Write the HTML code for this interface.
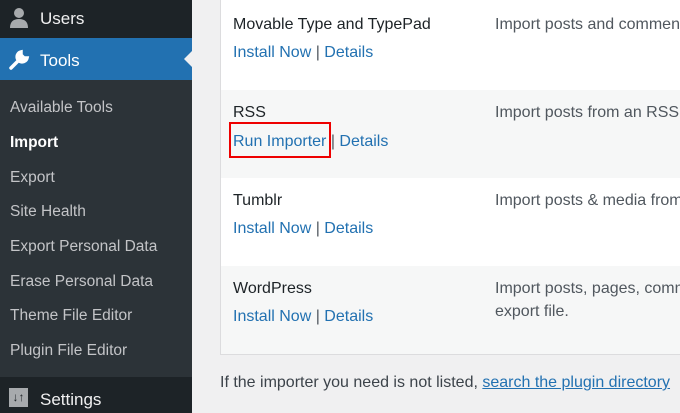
<!DOCTYPE html>
<html><head><style>
*{margin:0;padding:0;box-sizing:border-box}
body{width:680px;height:413px;overflow:hidden;background:#f0f0f1;font-family:"Liberation Sans",sans-serif;position:relative}
.side{position:absolute;left:0;top:0;width:192px;height:413px;background:#2c3338}
.users{position:absolute;top:0;left:0;width:192px;height:38px;background:#1d2327;color:#f0f0f1;font-size:17px}
.tools{position:absolute;top:38px;left:0;width:192px;height:42px;background:#2271b1;color:#fff;font-size:17px}
.settings{position:absolute;top:377px;left:0;width:192px;height:36px;background:#1d2327;color:#f0f0f1;font-size:17px}
.lbl{position:absolute;left:40px}
.sub{position:absolute;left:10px;color:#c3c4c7;font-size:15.5px}
.arrow{position:absolute;right:0;top:13px;width:0;height:0;border-top:8px solid transparent;border-bottom:8px solid transparent;border-right:8px solid #f0f0f1}
.box{position:absolute;left:220px;top:0;width:460px;height:355px;border-left:1px solid #dcdcde;border-bottom:1px solid #dcdcde;background:#fff;overflow:hidden}
.row{position:absolute;left:0;width:460px;height:88px;overflow:hidden}
.alt{background:#f6f7f7}
.t{position:absolute;left:12px;color:#1d2327;font-size:16px}
.l{position:absolute;left:12px;color:#2271b1;font-size:16px}
.l span{color:#50575e}
.d{position:absolute;left:274px;color:#50575e;font-size:16px;line-height:23px;white-space:nowrap}
</style></head><body>
<div class="side">
<div class="users">
<svg style="position:absolute;left:9px;top:7px" width="20" height="22" viewBox="0 0 20 22"><circle cx="10" cy="6" r="5" fill="#a7aaad"/><path d="M1 21 Q1 12 10 12 Q19 12 19 21 Z" fill="#a7aaad"/></svg>
<span class="lbl" style="top:9px">Users</span></div>
<div class="tools">
<svg style="position:absolute;left:8px;top:11px" width="22" height="22" viewBox="0 0 22 22"><path d="M3 19 L11 11 M13 3 a5 5 0 1 0 6 6 l-3 0 -3 -3 z" stroke="#fff" stroke-width="3.5" fill="#fff" stroke-linecap="round"/></svg>
<span class="lbl" style="top:13px">Tools</span><div class="arrow"></div></div>
<div class="sub" style="top:99px">Available Tools</div>
<div class="sub" style="top:134px;color:#fff;font-weight:bold">Import</div>
<div class="sub" style="top:169px">Export</div>
<div class="sub" style="top:203px">Site Health</div>
<div class="sub" style="top:238px">Export Personal Data</div>
<div class="sub" style="top:273px">Erase Personal Data</div>
<div class="sub" style="top:307px">Theme File Editor</div>
<div class="sub" style="top:342px">Plugin File Editor</div>
<div class="settings">
<div style="position:absolute;left:9px;top:11px;width:19px;height:19px;background:#a7aaad;color:#1d2327;font-size:12px;font-weight:bold;text-align:center;line-height:19px">↓↑</div>
<span class="lbl" style="top:13px">Settings</span></div>
</div>
<div class="box">
<div class="row" style="top:0"><div class="t" style="top:16px">Movable Type and TypePad</div><div class="l" style="top:44px">Install Now <span>|</span> Details</div><div class="d" style="top:13px">Import posts and comments</div></div>
<div class="row alt" style="top:90px"><div class="t" style="top:14px">RSS</div><div class="l" style="top:43px">Run Importer <span>|</span> Details</div><div class="d" style="top:11px">Import posts from an RSS feed</div>
<div style="position:absolute;left:8px;top:32px;width:102px;height:36px;border:2px solid #e00"></div></div>
<div class="row" style="top:178px"><div class="t" style="top:14px">Tumblr</div><div class="l" style="top:42px">Install Now <span>|</span> Details</div><div class="d" style="top:11px">Import posts &amp; media from</div></div>
<div class="row alt" style="top:266px;height:88px"><div class="t" style="top:14px">WordPress</div><div class="l" style="top:42px">Install Now <span>|</span> Details</div><div class="d" style="top:11px">Import posts, pages, comments<br>export file.</div></div>
</div>
<div style="position:absolute;left:220px;top:374px;font-size:16px;color:#3c434a;white-space:nowrap">If the importer you need is not listed, <span style="color:#2271b1;text-decoration:underline">search the plugin directory</span></div>
</body></html>
